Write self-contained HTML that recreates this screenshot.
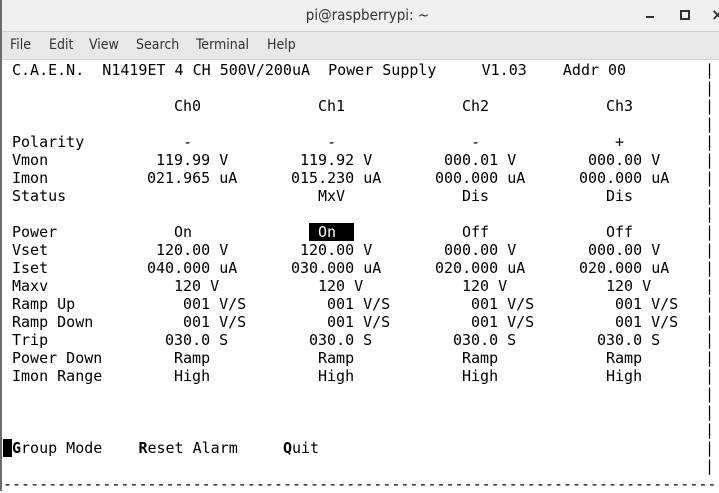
<!DOCTYPE html>
<html><head><meta charset="utf-8"><style>
html,body{margin:0;padding:0;}
body{width:719px;height:491px;overflow:hidden;background:#fff;position:relative;font-family:"DejaVu Sans Mono","Liberation Mono",monospace;}
#title{position:absolute;left:0;top:0;width:719px;height:31px;background:#f0f0ef;border-bottom:1px solid #cfcfcd;}
#title .t{position:absolute;left:0;width:735px;text-align:center;top:6px;font:15px "DejaVu Sans Condensed","DejaVu Sans",sans-serif;color:#2e3436;}
#menu{position:absolute;left:0;top:32px;width:719px;height:27px;background:#e8e8e7;border-bottom:1px solid #d6d6d4;}
#menu span{position:absolute;top:5px;font:14px "DejaVu Sans Condensed","DejaVu Sans",sans-serif;color:#2e3436;}
#lb{position:absolute;left:0;top:0;width:2px;height:491px;background:#6b6b6b;}
.s{position:absolute;font-size:15px;line-height:18px;height:18px;white-space:pre;color:#000;}
</style></head><body>
<div id="title"><div class="t">pi@raspberrypi: ~</div>
<div style="position:absolute;left:646px;top:16px;width:8px;height:2px;background:#2e3436"></div>
<div style="position:absolute;left:680px;top:10px;width:6px;height:6px;border:2px solid #2e3436"></div>
<div style="position:absolute;left:711px;top:5px;font:bold 16px 'DejaVu Sans',sans-serif;color:#2e3436">×</div>
</div>
<div id="menu">
<span style="left:10px">File</span><span style="left:49px">Edit</span><span style="left:89px">View</span><span style="left:136px">Search</span><span style="left:196px">Terminal</span><span style="left:267px">Help</span>
</div>
<div id="lb"></div>
<div id="term"></div>
<script>
var T=document.getElementById('term');
function put(col,row,txt,extra){var d=document.createElement('div');d.className='s';d.style.left=(3+col*9)+'px';d.style.top=(61+row*18)+'px';if(extra)d.style.cssText+=extra;d.textContent=txt;T.appendChild(d);return d;}
put(1,0,"C.A.E.N.  N1419ET 4 CH 500V/200uA  Power Supply     V1.03    Addr 00");
put(19,2,"Ch0");put(35,2,"Ch1");put(51,2,"Ch2");put(67,2,"Ch3");
var L=["Polarity","Vmon","Imon","Status","","Power","Vset","Iset","Maxv","Ramp Up","Ramp Down","Trip","Power Down","Imon Range"];
for(var i=0;i<L.length;i++)if(L[i])put(1,4+i,L[i]);
var off=[0,16,32,48];
function row4(r,c,arr){for(var k=0;k<4;k++)put(c+off[k],r,arr[k]);}
row4(4,20,["-","-","-","+"]);
row4(5,17,["119.99 V","119.92 V","000.01 V","000.00 V"]);
row4(6,16,["021.965 uA","015.230 uA","000.000 uA","000.000 uA"]);
put(35,7,"MxV");put(51,7,"Dis");put(67,7,"Dis");
put(19,9,"On");put(34,9," On  ","background:#000;color:#fff;");put(51,9,"Off");put(67,9,"Off");
row4(10,17,["120.00 V","120.00 V","000.00 V","000.00 V"]);
row4(11,16,["040.000 uA","030.000 uA","020.000 uA","020.000 uA"]);
row4(12,19,["120 V","120 V","120 V","120 V"]);
row4(13,20,["001 V/S","001 V/S","001 V/S","001 V/S"]);
row4(14,20,["001 V/S","001 V/S","001 V/S","001 V/S"]);
row4(15,18,["030.0 S","030.0 S","030.0 S","030.0 S"]);
row4(16,19,["Ramp","Ramp","Ramp","Ramp"]);
row4(17,19,["High","High","High","High"]);
put(0,21," ","background:#000;");
var g=put(1,21,"");g.innerHTML='<b>G</b>roup Mode    <b>R</b>eset Alarm     <b>Q</b>uit';
for(var r=0;r<23;r++)put(78,r,"|");
put(0,23,new Array(80).join("-"));
</script>
</body></html>
